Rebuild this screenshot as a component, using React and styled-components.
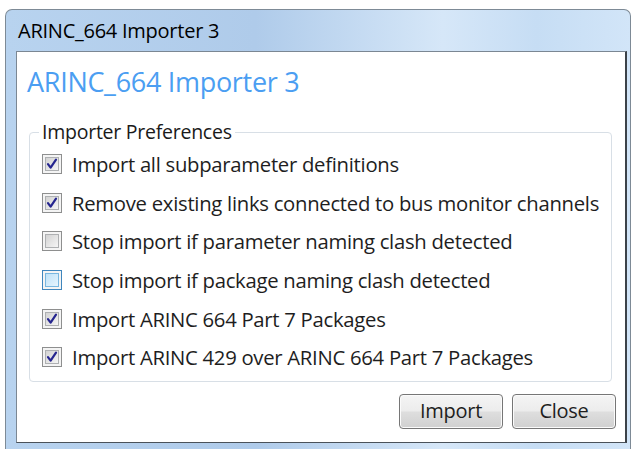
import React from 'react'
import styled, { createGlobalStyle } from 'styled-components'

const GlobalStyle = createGlobalStyle`
  html, body {
    margin: 0;
    padding: 0;
    background: #ffffff;
  }
  body {
    font-family: "Open Sans", "Noto Sans", sans-serif;
    overflow: hidden;
  }
`

const Desktop = styled.div`
  width: 631px;
  height: 449px;
  padding: 9px 0 0 5px;
  box-sizing: border-box;
  overflow: hidden;
`

const Frame = styled.div`
  width: 626px;
  height: 450px;
  box-sizing: border-box;
  border: 1px solid #7d8a96;
  border-bottom: none;
  border-radius: 7px 7px 0 0;
  background: linear-gradient(
    90deg,
    #b8d3ef 0%,
    #afcbea 40%,
    #d6e7f8 70%,
    #c6ddf4 85%,
    #d2e5f8 100%
  );
  display: flex;
  flex-direction: column;
  padding: 0 3px 0 10px;
`

const TitleBar = styled.div`
  height: 40px;
  display: flex;
  align-items: center;
  padding: 0 0 1px 2px;
  font-size: 20px;
  color: #000;
  letter-spacing: -0.25px;
`

const Client = styled.div`
  width: 611px;
  height: 392px;
  box-sizing: border-box;
  background: #fff;
  border: 1px solid #7b8793;
  border-right: 2px solid #3c4248;
  border-bottom-color: #4a525a;
  display: flex;
  flex-direction: column;
  padding: 11px 9px 0 10px;
`

const Heading = styled.h1`
  margin: 0;
  font-weight: 400;
  font-size: 27px;
  line-height: 38px;
  color: #4b9ef2;
  letter-spacing: -0.3px;
`

const Group = styled.fieldset`
  margin: 18px 4px 0 2px;
  padding: 0 0 4px 12px;
  border: 1px solid #d8dfe6;
  border-radius: 4px;
  display: flex;
  flex-direction: column;
`

const Legend = styled.legend`
  padding: 0 3px;
  margin-left: -3px;
  font-size: 19.5px;
  line-height: 26px;
  color: #1a1a1a;
  letter-spacing: -0.25px;
`

const Row = styled.label`
  display: flex;
  align-items: center;
  height: 38.6px;
  font-size: 20.3px;
  color: #1e1e1e;
  letter-spacing: -0.28px;
`

const Box = styled.span`
  width: 20px;
  height: 20px;
  flex: none;
  box-sizing: border-box;
  margin-right: 10px;
  border: 1px solid ${p => (p.$hover ? '#3f86bd' : '#8e8f8f')};
  padding: 2px;
  background: #f4f4f4;
  display: flex;
`

const BoxInner = styled.span`
  flex: 1;
  border: 1px solid ${p => (p.$hover ? '#79b7e0' : '#aeb0b2')};
  background: ${p =>
    p.$hover
      ? 'linear-gradient(135deg, #bfe2f8 0%, #e6f4fd 100%)'
      : 'linear-gradient(135deg, #d3d3d3 0%, #f5f5f5 100%)'};
  display: flex;
  align-items: center;
  justify-content: center;
`

const Buttons = styled.div`
  display: flex;
  justify-content: flex-end;
  gap: 9px;
  margin-top: 12px;
`

const Button = styled.button`
  width: 104px;
  height: 35px;
  border: 1px solid #767676;
  border-radius: 4px;
  font-family: inherit;
  font-size: 20px;
  color: #1e1e1e;
  letter-spacing: -0.25px;
  padding: 0 0 2px;
  background: linear-gradient(
    180deg,
    #f4f4f4 0%,
    #ececec 48%,
    #dedede 52%,
    #d0d0d0 100%
  );
  box-shadow: inset 0 0 0 1px #fbfbfb;
`

const Check = () => (
  <svg width="12" height="12" viewBox="0 0 12 12">
    <path
      d="M2 6.2 L4.6 9.6 L10 1.6"
      fill="none"
      stroke="#25258f"
      strokeWidth="2.2"
      strokeLinecap="round"
      strokeLinejoin="round"
    />
  </svg>
)

const options = [
  { text: 'Import all subparameter definitions', checked: true },
  { text: 'Remove existing links connected to bus monitor channels', checked: true },
  { text: 'Stop import if parameter naming clash detected', checked: false },
  { text: 'Stop import if package naming clash detected', checked: false, hover: true },
  { text: 'Import ARINC 664 Part 7 Packages', checked: true },
  { text: 'Import ARINC 429 over ARINC 664 Part 7 Packages', checked: true }
]

export default function App() {
  return (
    <>
      <GlobalStyle />
      <Desktop>
        <Frame>
          <TitleBar>ARINC_664 Importer 3</TitleBar>
          <Client>
            <Heading>ARINC_664 Importer 3</Heading>
            <Group>
              <Legend>Importer Preferences</Legend>
              {options.map((o, key) => (
                <Row key={key}>
                  <Box $hover={o.hover}>
                    <BoxInner $hover={o.hover}>{o.checked ? <Check /> : null}</BoxInner>
                  </Box>
                  {o.text}
                </Row>
              ))}
            </Group>
            <Buttons>
              <Button>Import</Button>
              <Button>Close</Button>
            </Buttons>
          </Client>
        </Frame>
      </Desktop>
    </>
  )
}
